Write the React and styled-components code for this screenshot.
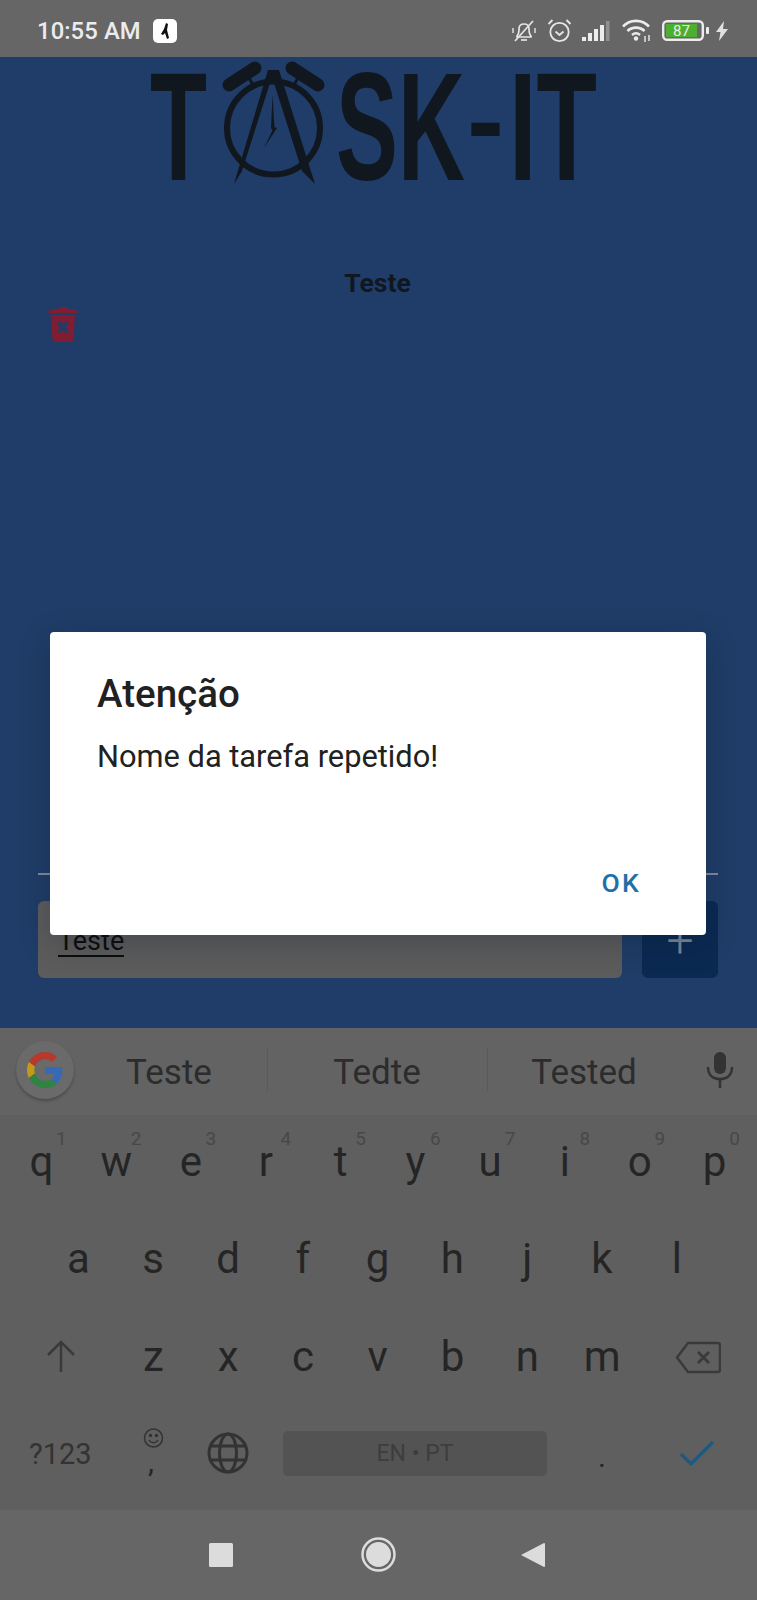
import React from "react";
import styled, { createGlobalStyle } from "styled-components";

const Global = createGlobalStyle`
  html, body { margin: 0; padding: 0; background: #666; }
  * { box-sizing: border-box; }
`;

const Screen = styled.div`
  position: relative;
  width: 757px;
  height: 1600px;
  display: flex;
  flex-direction: column;
  overflow: hidden;
  font-family: Roboto, "Liberation Sans", sans-serif;
`;

const StatusBar = styled.header`
  height: 57px;
  flex: none;
  background: #666666;
  display: flex;
  align-items: center;
  padding: 4px 29px 0 37px;
  color: #ececec;
`;
const Clock = styled.span`
  font-size: 23.8px;
  font-weight: 500;
  letter-spacing: 0.1px;
`;
const AppBadge = styled.svg`
  margin-left: 12px;
  width: 24px;
  height: 24px;
`;
const StatusIcons = styled.div`
  margin-left: auto;
  display: flex;
  align-items: center;
`;
const StatusSvg = styled.svg`
  display: block;
  flex: none;
  margin-left: ${(p) => p.$gap || 0}px;
`;

const Main = styled.main`
  height: 971px;
  flex: none;
  background: #1f3d68;
  display: flex;
  flex-direction: column;
  padding: 3px 39px 0 38px;
`;
const Logo = styled.svg`
  display: block;
  flex: none;
  width: 450px;
  height: 126px;
  margin-left: 110px;
  overflow: visible;
`;
const TaskName = styled.div`
  margin-top: 82px;
  text-align: center;
  color: #11171f;
  font-size: 26.5px;
  font-weight: 700;
  line-height: 30px;
  padding-right: 1px;
`;
const TrashButton = styled.svg`
  display: block;
  flex: none;
  margin: 7px 0 0 10px;
  width: 30px;
  height: 37px;
`;
const Divider = styled.hr`
  margin: auto 0 26px;
  width: 680px;
  height: 2px;
  border: 0;
  background: #7e8a9b;
`;
const InputRow = styled.div`
  display: flex;
  gap: 20px;
  margin-bottom: 50px;
`;
const TaskInput = styled.div`
  width: 584px;
  height: 77px;
  background: #5c5c5c;
  border-radius: 6px;
  padding: 25px 0 0 20px;
  font-size: 27px;
  line-height: 30px;
  color: #0d0d0d;
`;
const Underlined = styled.span`
  border-bottom: 2px solid #0d0d0d;
  display: inline-block;
  line-height: 27px;
`;
const AddButton = styled.div`
  width: 76px;
  height: 77px;
  background: #0b2a52;
  border-radius: 6px;
  display: flex;
  align-items: center;
  justify-content: center;
  color: #7d8897;
  font-size: 48px;
  font-weight: 300;
  padding-top: 1px;
`;

const Dialog = styled.div`
  position: absolute;
  left: 50px;
  top: 632px;
  width: 656px;
  height: 303px;
  background: #fff;
  border-radius: 4px;
  padding: 40px 47px 0;
  box-shadow: 0 8px 30px rgba(10, 20, 40, 0.25);
  display: flex;
  flex-direction: column;
`;
const DialogTitle = styled.h2`
  margin: 0;
  font-size: 38.5px;
  font-weight: 500;
  line-height: 44px;
  color: #212121;
`;
const DialogBody = styled.p`
  margin: 21px 0 0;
  font-size: 30.8px;
  font-weight: 400;
  line-height: 40px;
  color: #212121;
`;
const DialogAction = styled.div`
  margin-top: auto;
  margin-bottom: 37px;
  align-self: flex-end;
  margin-right: 18px;
  font-size: 26.500px;
  font-weight: 500;
  letter-spacing: 2.2px;
  line-height: 30px;
  color: #1f70a8;
`;

const Keyboard = styled.section`
  height: 482px;
  flex: none;
  background: #5f5f5f;
  display: flex;
  flex-direction: column;
`;
const SuggestionBar = styled.div`
  height: 87px;
  flex: none;
  background: #636363;
  display: flex;
  align-items: flex-start;
  position: relative;
`;
const GoogleBadge = styled.div`
  position: absolute;
  left: 16px;
  top: 13px;
  width: 58px;
  height: 58px;
  border-radius: 50%;
  background: #6a6a6a;
  box-shadow: 0 2px 3px rgba(0, 0, 0, 0.25);
  display: flex;
  align-items: center;
  justify-content: center;
`;
const Suggestion = styled.div`
  position: absolute;
  top: 23px;
  left: ${(p) => p.$center - 100}px;
  width: 200px;
  text-align: center;
  font-size: 35px;
  line-height: 44px;
  color: #2c2c2c;
`;
const SuggestionRule = styled.div`
  position: absolute;
  top: 20px;
  left: ${(p) => p.$x}px;
  width: 1px;
  height: 44px;
  background: #5a5a5a;
`;
const MicIcon = styled.svg`
  position: absolute;
  left: 706px;
  top: 24px;
  width: 28px;
  height: 36px;
`;
const KeyRow = styled.div`
  display: flex;
  height: ${(p) => p.$h}px;
  padding-left: ${(p) => p.$pad}px;
  flex: none;
`;
const Key = styled.div`
  position: relative;
  width: ${(p) => p.$w || 74.8}px;
  flex: none;
  text-align: center;
  font-size: 42px;
  line-height: 50px;
  padding-top: ${(p) => p.$top}px;
  color: #252525;
`;
const Hint = styled.span`
  position: absolute;
  left: 52px;
  top: 13px;
  font-size: 19px;
  line-height: 22px;
  color: #484848;
`;
const BottomRow = styled.div`
  position: relative;
  flex: 1;
`;
const BottomItem = styled.div`
  position: absolute;
  color: ${(p) => p.$color || "#303030"};
  font-size: ${(p) => p.$size || 28}px;
  line-height: 1;
  left: ${(p) => p.$x}px;
  top: ${(p) => p.$y}px;
`;
const SpaceBar = styled.div`
  position: absolute;
  left: 283px;
  top: 24px;
  width: 264px;
  height: 45px;
  background: #535353;
  border-radius: 5px;
  display: flex;
  align-items: center;
  justify-content: center;
  font-size: 23px;
  color: #3d3d3d;
`;
const KeyIcon = styled.svg`
  display: block;
  margin: ${(p) => p.$m || "0 auto"};
`;

const NavBar = styled.nav`
  height: 90px;
  flex: none;
  background: #666666;
  display: flex;
  align-items: center;
  padding: 0 0 1px 209px;
`;
const NavSvg = styled.svg`
  display: block;
  flex: none;
  margin-left: ${(p) => p.$gap || 0}px;
`;

const R1 = ["q", "w", "e", "r", "t", "y", "u", "i", "o", "p"];
const R2 = ["a", "s", "d", "f", "g", "h", "j", "k", "l"];
const R3 = ["z", "x", "c", "v", "b", "n", "m"];
const logoFont = { fontFamily: "'Liberation Sans', Arial, sans-serif", fontWeight: 700, fill: "#11171f" };

export default function App() {
  return (
    <Screen>
      <Global />
      <StatusBar>
        <Clock>10:55 AM</Clock>
        <AppBadge viewBox="0 0 24 24">
          <rect x="0" y="0" width="24" height="24" rx="5" fill="#fff" />
          <path d="M13 4l2 1-1 6 2 8-2 1-2-6-2 2-2-1 3-5 1-3z" fill="#111" />
        </AppBadge>
        <StatusIcons>
          <StatusSvg width="24" height="24" viewBox="0 0 24 24" fill="none" stroke="#e6e6e6" strokeWidth="1.7">
            <path d="M5 17c2-2 2-4 2-7 0-3 2-5 5-5s5 2 5 5c0 3 0 5 2 7v1H5z" />
            <path d="M9 21h6" />
            <path d="M3 22L21 2" />
            <path d="M1 9v5M23 9v5" strokeWidth="1.4" />
          </StatusSvg>
          <StatusSvg $gap={11} width="25" height="25" viewBox="0 0 25 25" fill="none" stroke="#e6e6e6" strokeWidth="1.8">
            <circle cx="12.5" cy="14" r="9.2" />
            <path d="M8.5 13.5l4 3.5 4-3.5" />
            <path d="M1.5 6l4-4M23.5 6l-4-4" />
          </StatusSvg>
          <StatusSvg $gap={10} width="28" height="22" viewBox="0 0 28 22">
            <rect x="0" y="17" width="4" height="4" fill="#ececec" />
            <rect x="6" y="13" width="4" height="8" fill="#ececec" />
            <rect x="12" y="9" width="4" height="12" fill="#ececec" />
            <rect x="18" y="5" width="4" height="16" fill="#ececec" />
            <rect x="24" y="1" width="3.5" height="20" fill="#8f8f8f" />
          </StatusSvg>
          <StatusSvg $gap={12} width="30" height="23" viewBox="0 0 30 23" fill="none" stroke="#ececec" strokeWidth="2.6">
            <path d="M1 7.5c7-7.5 19-7.5 26 0" />
            <path d="M5.5 12c4.5-4.5 12.5-4.5 17 0" />
            <path d="M10 16c2.5-2.2 5.5-2.2 8 0" />
            <circle cx="14" cy="19.5" r="2.2" fill="#ececec" stroke="none" />
            <path d="M23 17v6M27 16v6" strokeWidth="1.4" />
          </StatusSvg>
          <StatusSvg $gap={10} width="47" height="21" viewBox="0 0 47 21">
            <rect x="1.2" y="1.2" width="39.6" height="18.6" rx="4" fill="none" stroke="#ececec" strokeWidth="2.4" />
            <rect x="4" y="4" width="31" height="13" fill="#4caf30" />
            <text x="19.5" y="15.5" textAnchor="middle" fontFamily="Roboto, sans-serif" fontSize="15" fill="#ececec">87</text>
            <rect x="44" y="7" width="3" height="7" rx="1" fill="#ececec" />
          </StatusSvg>
          <StatusSvg $gap={7} width="12" height="20" viewBox="0 0 12 20">
            <path d="M8 0L0 11h4.5L3 20l9-12H7z" fill="#e0e0e0" />
          </StatusSvg>
        </StatusIcons>
      </StatusBar>

      <Main>
        <Logo viewBox="148 60 450 126">
          <text x="150" y="180" fontSize="154" textLength="57" lengthAdjust="spacingAndGlyphs" style={logoFont}>T</text>
          <text x="336" y="180" fontSize="154" textLength="129" lengthAdjust="spacingAndGlyphs" style={logoFont}>SK</text>
          <text x="467" y="158" fontSize="112" textLength="37" lengthAdjust="spacingAndGlyphs" style={logoFont}>-</text>
          <text x="509" y="180" fontSize="154" textLength="88" lengthAdjust="spacingAndGlyphs" style={logoFont}>IT</text>
          <circle cx="273.5" cy="128" r="46.5" fill="none" stroke="#11171f" strokeWidth="6" />
          <path d="M229 85L255 68" stroke="#11171f" strokeWidth="13" strokeLinecap="round" />
          <path d="M318 85L292 68" stroke="#11171f" strokeWidth="13" strokeLinecap="round" />
          <path d="M248 76l5 9M299 76l-5 9" stroke="#11171f" strokeWidth="3" />
          <path d="M268 70h11l36 114-13-13-28-88-2-3-2 3-28 88-8 13z" fill="#11171f" />
          <path d="M272.5 95l2 33-1.5 3-2-3z" fill="#11171f" />
          <path d="M274 127l3 1-13 20z" fill="#11171f" />
        </Logo>
        <TaskName>Teste</TaskName>
        <TrashButton viewBox="0 0 30 37">
          <path d="M0 8c0-3 5-4 10-4 1-3 9-3 10 0 5 0 10 1 10 4z" fill="#7f1d33" />
          <path d="M3 10h24l-1.5 25a2 2 0 0 1-2 2H6.500a2 2 0 0 1-2-2z" fill="#7f1d33" />
          <path d="M10.500 17l9 10M19.500 17l-9 10" stroke="#1f3d68" strokeWidth="3.800" />
        </TrashButton>
        <Divider />
        <InputRow>
          <TaskInput>
            <Underlined>Teste</Underlined>
          </TaskInput>
          <AddButton>+</AddButton>
        </InputRow>
      </Main>

      <Keyboard>
        <SuggestionBar>
          <GoogleBadge>
            <svg width="36" height="36" viewBox="0 0 48 48">
              <path fill="#b5392d" d="M24 9.5c3.54 0 6.71 1.22 9.21 3.6l6.85-6.85C35.9 2.38 30.47 0 24 0 14.62 0 6.51 5.38 2.56 13.22l7.98 6.19C12.43 13.72 17.74 9.5 24 9.5z" />
              <path fill="#3669b8" d="M46.98 24.55c0-1.57-.15-3.09-.38-4.55H24v9.02h12.94c-.58 2.96-2.26 5.48-4.78 7.18l7.73 6c4.51-4.18 7.09-10.36 7.09-17.65z" />
              <path fill="#c19a1a" d="M10.53 28.59c-.48-1.45-.76-2.99-.76-4.59s.27-3.14.76-4.59l-7.98-6.19C.92 16.46 0 20.12 0 24c0 3.88.92 7.54 2.56 10.78l7.97-6.19z" />
              <path fill="#2f8343" d="M24 48c6.48 0 11.93-2.13 16.03-5.81l-7.730-6c-2.15 1.45-4.92 2.3-8.3 2.3-6.26 0-11.57-4.22-13.47-9.91l-7.98 6.19C6.51 42.62 14.62 48 24 48z" />
            </svg>
          </GoogleBadge>
          <Suggestion $center={169}>Teste</Suggestion>
          <SuggestionRule $x={267} />
          <Suggestion $center={377}>Tedte</Suggestion>
          <SuggestionRule $x={487} />
          <Suggestion $center={584}>Tested</Suggestion>
          <MicIcon viewBox="0 0 28 36">
            <rect x="8" y="0" width="12" height="22" rx="6" fill="#333" />
            <path d="M2 15c0 8 5 12 12 12s12-4 12-12" fill="none" stroke="#333" strokeWidth="2.500" />
            <path d="M14 27v9" stroke="#333" strokeWidth="2.500" />
          </MicIcon>
        </SuggestionBar>
        <KeyRow $h={97} $pad={4}>
          {R1.map((k, i) => (
            <Key key={k} $top={22}>
              {k}
              <Hint>{(i + 1) % 10}</Hint>
            </Key>
          ))}
        </KeyRow>
        <KeyRow $h={98} $pad={41}>
          {R2.map((k) => (
            <Key key={k} $top={22}>{k}</Key>
          ))}
        </KeyRow>
        <KeyRow $h={97} $pad={0}>
          <Key $w={116} $top={30}>
            <KeyIcon width="30" height="32" viewBox="0 0 30 32" fill="none" stroke="#3a3a3a" strokeWidth="2.500" $m="0 0 0 46px">
              <path d="M15 32V2M2 15L15 2l13 13" />
            </KeyIcon>
          </Key>
          {R3.map((k) => (
            <Key key={k} $top={22}>{k}</Key>
          ))}
          <Key $w={81} $top={31}>
            <KeyIcon width="46" height="33" viewBox="0 0 46 33" fill="none" stroke="#3a3a3a" strokeWidth="2.500" $m="0 0 0 35px">
              <path d="M13 2h30a2 2 0 0 1 2 2v25a2 2 0 0 1-2 2H13L2 16.500z" />
              <path d="M23 11l11 11M34 11L23 22" strokeWidth="2.800" />
            </KeyIcon>
          </Key>
        </KeyRow>
        <BottomRow>
          <BottomItem $x={29} $y={33} $size={29} $color="#333">?123</BottomItem>
          <BottomItem $x={143} $y={19}>
            <svg width="21" height="22" viewBox="0 0 21 22" fill="none" stroke="#333" strokeWidth="1.500">
              <circle cx="10.500" cy="11" r="9" />
              <circle cx="7.500" cy="8.500" r="1" fill="#333" />
              <circle cx="13.500" cy="8.500" r="1" fill="#333" />
              <path d="M6 13c2 3.500 7 3.500 9 0" />
            </svg>
          </BottomItem>
          <BottomItem $x={148} $y={40} $size={30} $color="#252525">,</BottomItem>
          <BottomItem $x={207} $y={25}>
            <svg width="42" height="42" viewBox="0 0 42 42" fill="none" stroke="#333" strokeWidth="3">
              <circle cx="21" cy="21" r="19" />
              <ellipse cx="21" cy="21" rx="8.500" ry="19" />
              <path d="M3 14h36M3 28h36" />
            </svg>
          </BottomItem>
          <SpaceBar>EN • PT</SpaceBar>
          <BottomItem $x={598} $y={35} $size={30} $color="#252525">.</BottomItem>
          <BottomItem $x={679} $y={33}>
            <svg width="36" height="26" viewBox="0 0 36 26" fill="none" stroke="#1c5a80" strokeWidth="3.200">
              <path d="M2 14l10 10L34 2" />
            </svg>
          </BottomItem>
        </BottomRow>
      </Keyboard>

      <NavBar>
        <NavSvg width="24" height="24" viewBox="0 0 24 24">
          <rect width="24" height="24" rx="1.500" fill="#dcdcdc" />
        </NavSvg>
        <NavSvg $gap={128} width="35" height="35" viewBox="0 0 35 35">
          <circle cx="17.500" cy="17.500" r="16" fill="none" stroke="#dcdcdc" strokeWidth="2.500" />
          <circle cx="17.500" cy="17.500" r="12.500" fill="#dcdcdc" />
        </NavSvg>
        <NavSvg $gap={125} width="24" height="26" viewBox="0 0 24 26">
          <path d="M23 1a1 1 0 0 1 1 1v22a1 1 0 0 1-1 1L0 13z" fill="#dcdcdc" />
        </NavSvg>
      </NavBar>

      <Dialog>
        <DialogTitle>Atenção</DialogTitle>
        <DialogBody>Nome da tarefa repetido!</DialogBody>
        <DialogAction>OK</DialogAction>
      </Dialog>
    </Screen>
  );
}
